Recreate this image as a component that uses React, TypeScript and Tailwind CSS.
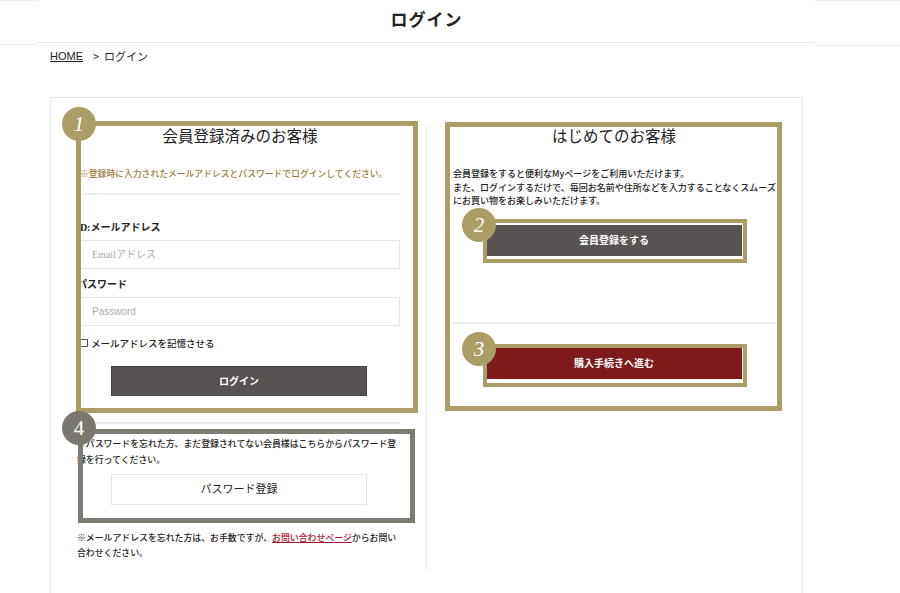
const gothic = "font-['Noto_Sans_CJK_JP','Noto_Sans',sans-serif]";
const mincho = "font-['Liberation_Serif','Noto_Sans_CJK_JP',serif]";

function Badge({ n, className, italic }: { n: string; className: string; italic?: boolean }) {
  return (
    <div
      className={`absolute w-[34px] h-[34px] rounded-full flex items-center justify-center text-white text-[21px] leading-none font-['Liberation_Serif',serif] ${
        italic ? "italic" : ""
      } ${className}`}
    >
      {n}
    </div>
  );
}

export default function App() {
  return (
    <div className={`w-[900px] h-[593px] overflow-hidden bg-white text-[#222] ${gothic}`}>
      {/* header */}
      <div className="flex h-[47px]">
        <div className="w-[38px] border-t border-[#eee]">
          <div className="h-[44px] border-b border-[#eee]" />
        </div>
        <div className="w-[777px] h-[43px] border-b border-[#e6e6e6] flex items-center justify-center">
          <h1 className={`text-[17px] font-bold tracking-[1px] ${mincho}`}>ログイン</h1>
        </div>
        <div className="flex-1 border-t border-[#eee]">
          <div className="h-[45px] border-b border-[#eee]" />
        </div>
      </div>

      {/* breadcrumb */}
      <div className="pl-[50px] mt-[1px] text-[11px] leading-[16px] flex gap-[10px]">
        <span className="underline font-['Liberation_Sans',sans-serif]">HOME</span>
        <span>&gt;&nbsp; ログイン</span>
      </div>

      {/* panel */}
      <div className="relative ml-[50px] mt-[33px] w-[753px] h-[500px] border border-[#e8e8e8] flex pt-[24px]">
        {/* left column */}
        <div className="ml-[29px] w-[320px] flex flex-col">
          <h2 className={`mt-[5px] text-center text-[15.5px] leading-[20px] ${mincho}`}>会員登録済みのお客様</h2>
          <p className="mt-[20px] text-[8.8px] font-medium text-[#9b7b3b] leading-[14px] whitespace-nowrap">
            ※登録時に入力されたメールアドレスとパスワードでログインしてください。
          </p>
          <div className="mt-[12px] border-t-2 border-[#eeeeee]" />
          <label className={`mt-[26px] -ml-[4px] text-[10px] font-bold leading-[14px] ${mincho}`}>ID:メールアドレス</label>
          <div className="mt-[5px] h-[29px] border border-[#e6e6e6] flex items-center pl-[11px] text-[10px] text-[#aaa]">
            <span className={mincho}>Emailアドレス</span>
          </div>
          <label className={`mt-[9px] -ml-[3px] text-[10px] font-bold leading-[14px] ${mincho}`}>パスワード</label>
          <div className="mt-[5px] h-[29px] border border-[#e6e6e6] flex items-center pl-[11px] text-[10px] text-[#aaa] font-['Liberation_Sans',sans-serif]">
            Password
          </div>
          <div className="mt-[10px] flex items-center gap-[3px] text-[9.5px] font-medium leading-[14px]">
            <span className="w-[8px] h-[8px] border border-[#555]" />
            <span>メールアドレスを記憶させる</span>
          </div>
          <button
            className={`mt-[16px] ml-[31px] w-[256px] h-[30px] bg-[#585352] text-white text-[10px] font-bold border border-[#444] ${mincho}`}
          >
            ログイン
          </button>
          <div className="mt-[26px] ml-[10px] border-t-2 border-[#eeeeee]" />
          <p className="mt-[12px] -ml-[3px] w-[326px] text-[8.9px] font-medium leading-[16px]">
            ※パスワードを忘れた方、まだ登録されてない会員様はこちらからパスワード登録を行ってください。
          </p>
          <button
            className={`mt-[6px] ml-[31px] w-[256px] h-[31px] bg-white border border-[#e6e6e6] text-[11px] ${mincho}`}
          >
            パスワード登録
          </button>
          <div className="mt-[25px] -ml-[3px] w-[326px] text-[8.9px] font-medium leading-[15px]">
            <div>
              ※メールアドレスを忘れた方は、お手数ですが、
              <a className="text-[#b0142a] underline">お問い合わせページ</a>
              からお問い
            </div>
            <div>合わせください。</div>
          </div>
        </div>

        {/* divider */}
        <div className="ml-[26px] mt-[4px] h-[443px] border-l border-[#e6e6e6]" />

        {/* right column */}
        <div className="ml-[26px] w-[322px] flex flex-col">
          <h2 className={`mt-[5px] text-center text-[15.5px] leading-[20px] ${mincho}`}>はじめてのお客様</h2>
          <p className="mt-[20px] text-[9px] font-medium leading-[13.5px] whitespace-nowrap">
            会員登録をすると便利なMyページをご利用いただけます。
            <br />
            また、ログインするだけで、毎回お名前や住所などを入力することなくスムーズ
            <br />
            にお買い物をお楽しみいただけます。
          </p>
          <button
            className={`mt-[17px] ml-[33px] w-[256px] h-[31px] bg-[#585352] text-white text-[10px] font-bold ${mincho}`}
          >
            会員登録をする
          </button>
          <div className="mt-[66px] border-t-2 border-[#eeeeee]" />
          <button
            className={`mt-[24px] ml-[33px] w-[256px] h-[31px] bg-[#7e1a1a] text-white text-[10px] font-bold ${mincho}`}
          >
            購入手続きへ進む
          </button>
        </div>

        {/* annotation frames */}
        <div className="absolute left-[25px] top-[23px] w-[342px] h-[292px] border-[5px] border-[#aa9d66]" />
        <div className="absolute left-[27px] top-[331px] w-[337px] h-[94px] border-[5px] border-[#7e7b73]" />
        <div className="absolute left-[394px] top-[24px] w-[337px] h-[289px] border-[5px] border-[#aa9d66]" />
        <div className="absolute left-[432px] top-[121px] w-[264px] h-[44px] border-[4px] border-[#aa9d66]" />
        <div className="absolute left-[432px] top-[246px] w-[264px] h-[43px] border-[4px] border-[#aa9d66]" />

        <Badge n="1" italic className="left-[11px] top-[9px] bg-[#aa9d66]" />
        <Badge n="4" className="left-[11px] top-[313px] bg-[#7a7771]" />
        <Badge n="2" italic className="left-[411px] top-[110px] bg-[#aa9d66] font-['Liberation_Sans',sans-serif]" />
        <Badge n="3" italic className="left-[411px] top-[234px] bg-[#aa9d66]" />
      </div>
    </div>
  );
}
